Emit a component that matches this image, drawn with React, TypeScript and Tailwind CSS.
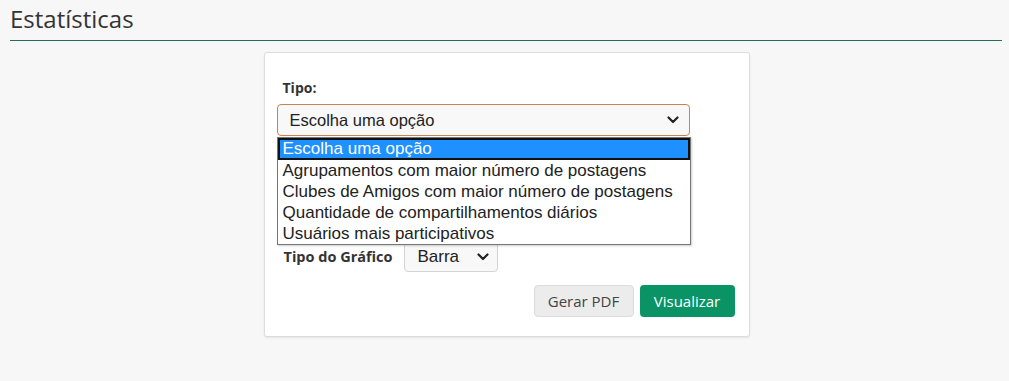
import React from "react";

const OPTIONS = [
  "Escolha uma opção",
  "Agrupamentos com maior número de postagens",
  "Clubes de Amigos com maior número de postagens",
  "Quantidade de compartilhamentos diários",
  "Usuários mais participativos",
];

function Chevron() {
  return (
    <svg width="12" height="8" viewBox="0 0 12 8" fill="none">
      <path d="M1.5 1.5 L6 6 L10.5 1.5" stroke="#222" strokeWidth="2.2" strokeLinecap="round" strokeLinejoin="round" />
    </svg>
  );
}

export default function App() {
  return (
    <div className="min-h-[381px] w-full bg-[#f7f7f7] font-['Open_Sans',sans-serif] text-[#333]">
      <div className="pl-[10px] pr-[7px] pt-[2px]">
        <h1 className="text-[24px] leading-[33px] text-[#333]">Estatísticas</h1>
        <div className="mt-[5px] h-px w-full bg-[#1f6e5a]" />
      </div>

      <div className="mx-auto mt-[11px] flex h-[285px] w-[486px] translate-x-[2px] flex-col rounded-[3px] border border-[#dcdcdc] bg-white px-[12px] pt-[25px] shadow-[0_1px_2px_rgba(0,0,0,0.08)]">
        <label className="ml-[6px] text-[14px] font-bold leading-[19px] text-[#333]">Tipo:</label>
        <div className="relative mt-[7px] w-[413px]">
          <div className="flex h-[32px] items-center justify-between rounded-[4px] border border-[#c8844a] bg-[#f8f8f8] pl-[12px] pr-[10px] font-['Liberation_Sans',Arial,sans-serif] text-[16.5px] text-[#222]">
            <span>Escolha uma opção</span>
            <Chevron />
          </div>
          <ul className="absolute left-0 top-[33px] z-10 w-[414px] border border-[#767676] bg-white font-['Liberation_Sans',Arial,sans-serif] text-[17px] leading-[21px] text-[#222] shadow-[1px_1px_2px_rgba(0,0,0,0.2)]">
            {OPTIONS.map((o, i) => (
              <li
                key={o}
                className={
                  i === 0
                    ? "border-2 border-[#111] bg-[#1e90ff] pl-[3px] leading-[18px] text-white"
                    : "pl-[5px]"
                }
              >
                {o}
              </li>
            ))}
          </ul>
        </div>

        <div className="h-[106px]" />

        <div className="ml-[7px] flex items-center gap-[12px]">
          <span className="text-[14.5px] font-bold text-[#333]">Tipo do Gráfico</span>
          <div className="flex h-[30px] w-[94px] items-center justify-between rounded-[4px] border border-[#d4d4d4] bg-[#f8f8f8] pl-[12px] pr-[8px] font-['Liberation_Sans',Arial,sans-serif] text-[17px] text-[#222]">
            <span>Barra</span>
            <Chevron />
          </div>
        </div>

        <div className="mt-[13px] flex justify-end gap-[6px] pr-[2px]">
          <button className="h-[32px] w-[100px] rounded-[4px] border border-[#dcdcdc] bg-[#ececec] text-[15px] text-[#444]">
            Gerar PDF
          </button>
          <button className="h-[32px] w-[95px] rounded-[4px] bg-[#0a9465] text-[15px] text-white">
            Visualizar
          </button>
        </div>
      </div>
    </div>
  );
}
